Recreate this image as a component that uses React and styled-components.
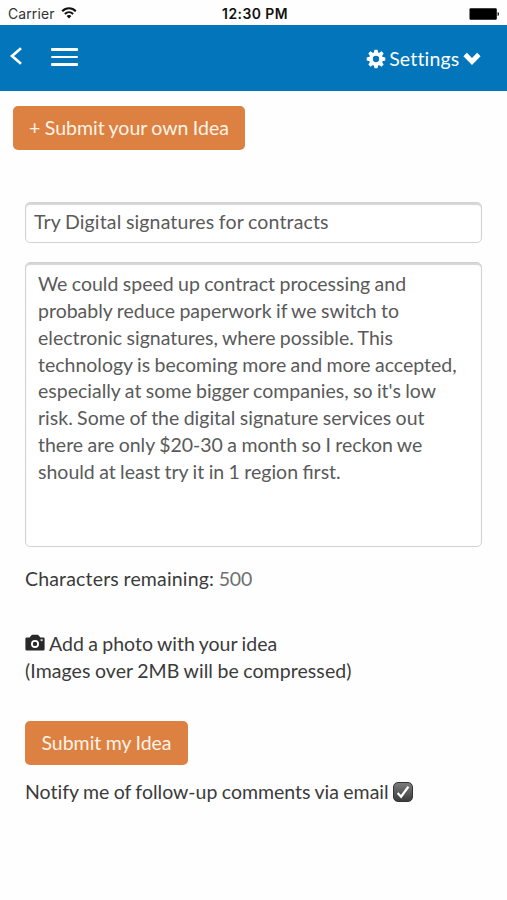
import { useState } from "react";
import styled, { createGlobalStyle } from "styled-components";

const IDEA_TEXT =
  "We could speed up contract processing and probably reduce paperwork if we switch to electronic signatures, where possible. This technology is becoming more and more accepted, especially at some bigger companies, so it's low risk. Some of the digital signature services out there are only $20-30 a month so I reckon we should at least try it in 1 region first.";

const App = () => {
  const [title, setTitle] = useState("Try Digital signatures for contracts");
  const [idea, setIdea] = useState(IDEA_TEXT);
  const [notify, setNotify] = useState(true);

  return (
    <Screen>
      <GlobalStyle />
      <StatusBar>
        <Carrier>
          Carrier <WifiIcon />
        </Carrier>
        <Clock>12:30 PM</Clock>
        <BatteryIcon />
      </StatusBar>

      <NavBar>
        <NavButton aria-label="Back">
          <BackIcon />
        </NavButton>
        <MenuButton aria-label="Menu">
          <MenuLine />
          <MenuLine />
          <MenuLine />
        </MenuButton>
        <SettingsButton>
          <CogIcon />
          <span>Settings</span>
          <ChevronIcon />
        </SettingsButton>
      </NavBar>

      <Toolbar>
        <Button $width={232}>+ Submit your own Idea</Button>
      </Toolbar>

      <Form onSubmit={(e) => e.preventDefault()}>
        <TitleInput value={title} onChange={(e) => setTitle(e.target.value)} />
        <IdeaInput
          value={idea}
          spellCheck={false}
          onChange={(e) => setIdea(e.target.value)}
        />
        <Counter>
          Characters remaining: <Muted>500</Muted>
        </Counter>
        <Photo>
          <PhotoLink>
            <CameraIcon />
            <span>Add a photo with your idea</span>
          </PhotoLink>
          <PhotoHint>(Images over 2MB will be compressed)</PhotoHint>
        </Photo>
        <Button $width={163}>Submit my Idea</Button>
        <Notify>
          Notify me of follow-up comments via email
          <Checkbox
            type="button"
            role="checkbox"
            aria-checked={notify}
            onClick={() => setNotify(!notify)}
          >
            {notify && <CheckIcon />}
          </Checkbox>
        </Notify>
      </Form>
    </Screen>
  );
};

const WifiIcon = () => (
  <svg width="16" height="12" viewBox="0 0 16 12" fill="none" stroke="#111">
    <path d="M1.2 4.3C5 .3 11 .3 14.8 4.3" strokeWidth="2" />
    <path d="M3.8 7C6.2 4.7 9.8 4.7 12.2 7" strokeWidth="1.9" />
    <path d="M8 11.4L5.6 9C6.9 7.7 9.1 7.7 10.4 9Z" fill="#111" stroke="none" />
  </svg>
);

const BatteryIcon = () => (
  <svg width="31" height="12" viewBox="0 0 31 12">
    <rect x="0.5" y="0.3" width="27.3" height="11.4" rx="1.2" fill="#000" />
    <path d="M28.6 4C30.4 4.4 30.4 7.6 28.6 8Z" fill="#000" />
  </svg>
);

const BackIcon = () => (
  <svg width="12" height="18" viewBox="0 0 12 18" fill="none">
    <path d="M11 1.2L2 9L11 16.8" stroke="#fff" strokeWidth="2.7" />
  </svg>
);

const TEETH = [0, 45, 90, 135, 180, 225, 270, 315];

const CogIcon = () => (
  <svg width="20" height="20" viewBox="0 0 20 20">
    {TEETH.map((angle) => (
      <path
        key={angle}
        d="M7.6 4.5L8.5 .7H11.5L12.4 4.5Z"
        fill="#fff"
        transform={`rotate(${angle} 10 10)`}
      />
    ))}
    <circle cx="10" cy="10" r="5" fill="none" stroke="#fff" strokeWidth="3.7" />
  </svg>
);

const ChevronIcon = () => (
  <svg width="18" height="14" viewBox="0 0 18 14">
    <path d="M.4 4.3L3.9 .8L9 5.9L14.1 .8L17.6 4.3L9 12.9Z" fill="#fff" />
  </svg>
);

const CameraIcon = () => (
  <svg width="20" height="18" viewBox="0 0 20 18">
    <path
      d="M1.7 3.5H4.6L6.4 1.2Q6.8.7 7.4.7H12.5Q13.1.7 13.5 1.2L15.4 3.5H18.3Q19.6 3.5 19.6 4.8V15.3Q19.6 16.6 18.3 16.6H1.7Q.4 16.6.4 15.3V4.8Q.4 3.5 1.7 3.5Z"
      fill="#292929"
    />
    <circle cx="10" cy="9.9" r="3.1" fill="none" stroke="#fff" strokeWidth="1.8" />
    <rect x="15.6" y="5.2" width="2" height="1.9" fill="#ddd" />
  </svg>
);

const CheckIcon = () => (
  <svg width="16" height="16" viewBox="0 0 16 16" fill="none">
    <path d="M2.6 9L6.1 12.7L13.4 2.6" stroke="#fff" strokeWidth="2.3" />
  </svg>
);

const GlobalStyle = createGlobalStyle`
  * {
    box-sizing: border-box;
  }

  body {
    margin: 0;
    background-color: #fefefe;
    color: #3b3b3b;
    font-family: Lato, sans-serif;
    font-size: 19.5px;
    font-variant-ligatures: none;
    line-height: 26.86px;
    word-spacing: -0.6px;
  }

  button,
  input,
  textarea {
    font: inherit;
    letter-spacing: inherit;
    word-spacing: inherit;
  }
`;

const Screen = styled.div`
  min-height: 900px;
  width: 507px;
`;

const StatusBar = styled.header`
  align-items: center;
  color: #111;
  display: grid;
  font-family: Inter, sans-serif;
  font-size: 13.9px;
  grid-template-columns: 1fr auto 1fr;
  height: 25px;
  line-height: 25px;
  padding: 2px 7px 0 8px;
  word-spacing: 0;

  > svg {
    justify-self: end;
    margin-bottom: 2px;
  }
`;

const Carrier = styled.div`
  align-items: center;
  color: #333;
  display: flex;
  gap: 6px;
  letter-spacing: 0.15px;

  svg {
    margin-bottom: 3px;
  }
`;

const Clock = styled.div`
  font-weight: 600;
  letter-spacing: 0.45px;
  padding-left: 2px;
`;

const NavBar = styled.nav`
  align-items: center;
  background-color: #0275bb;
  color: #fff;
  display: flex;
  height: 66px;
  padding: 0 26px 0 10px;
`;

const NavButton = styled.button`
  background: none;
  border: 0;
  color: inherit;
  display: flex;
  padding: 0;
  margin-bottom: 4px;
`;

const MenuButton = styled(NavButton)`
  flex-direction: column;
  gap: 5px;
  margin: 0 0 2px 29px;
`;

const MenuLine = styled.span`
  background-color: #fff;
  border-radius: 1px;
  height: 2.5px;
  width: 27px;
`;

const SettingsButton = styled(NavButton)`
  align-items: center;
  gap: 3.5px;
  letter-spacing: 0.18px;
  margin: 2px 0 0 auto;
`;

const Toolbar = styled.div`
  padding: 15px 13px 0;
`;

const Button = styled.button`
  background-color: #dc8141;
  border: 0;
  border-radius: 5px;
  color: #fff3e7;
  display: block;
  height: 44px;
  padding: 1px 0 0;
  text-align: center;
  width: ${({ $width }) => $width}px;
`;

const Form = styled.form`
  padding: 52px 25px 0;
`;

const TitleInput = styled.input`
  background-color: #fff;
  border: 1px solid #d2d2d2;
  border-radius: 5px;
  box-shadow: inset 0 2px 1px #d6d6d6;
  color: #5a5a5a;
  display: block;
  height: 41px;
  letter-spacing: 0.14px;
  outline: 0;
  padding: 0 8px 2px;
  width: 457px;
`;

const IdeaInput = styled(TitleInput).attrs({ as: "textarea" })`
  font-variant-ligatures: normal;
  height: 285px;
  letter-spacing: normal;
  margin-top: 19px;
  padding: 8px 12px;
  resize: none;
`;

const Counter = styled.div`
  letter-spacing: 0.17px;
  margin-top: 19px;
`;

const Muted = styled.span`
  color: #6f6f6f;
  letter-spacing: -0.1px;
`;

const Photo = styled.div`
  margin: 38px 0 36px;
`;

const PhotoLink = styled.div`
  align-items: center;
  display: flex;
  gap: 4px;

  svg {
    margin-bottom: 3px;
  }
`;

const PhotoHint = styled.div`
  letter-spacing: 0.07px;
`;

const Notify = styled.div`
  align-items: center;
  display: flex;
  gap: 4px;
  margin-top: 14px;
`;

const Checkbox = styled.button`
  align-items: center;
  background: linear-gradient(#7b7b7b, #3c3c3c);
  border: 1px solid #333;
  border-radius: 5px;
  display: flex;
  height: 20px;
  justify-content: center;
  padding: 0;
  width: 20px;
`;

export default App;
